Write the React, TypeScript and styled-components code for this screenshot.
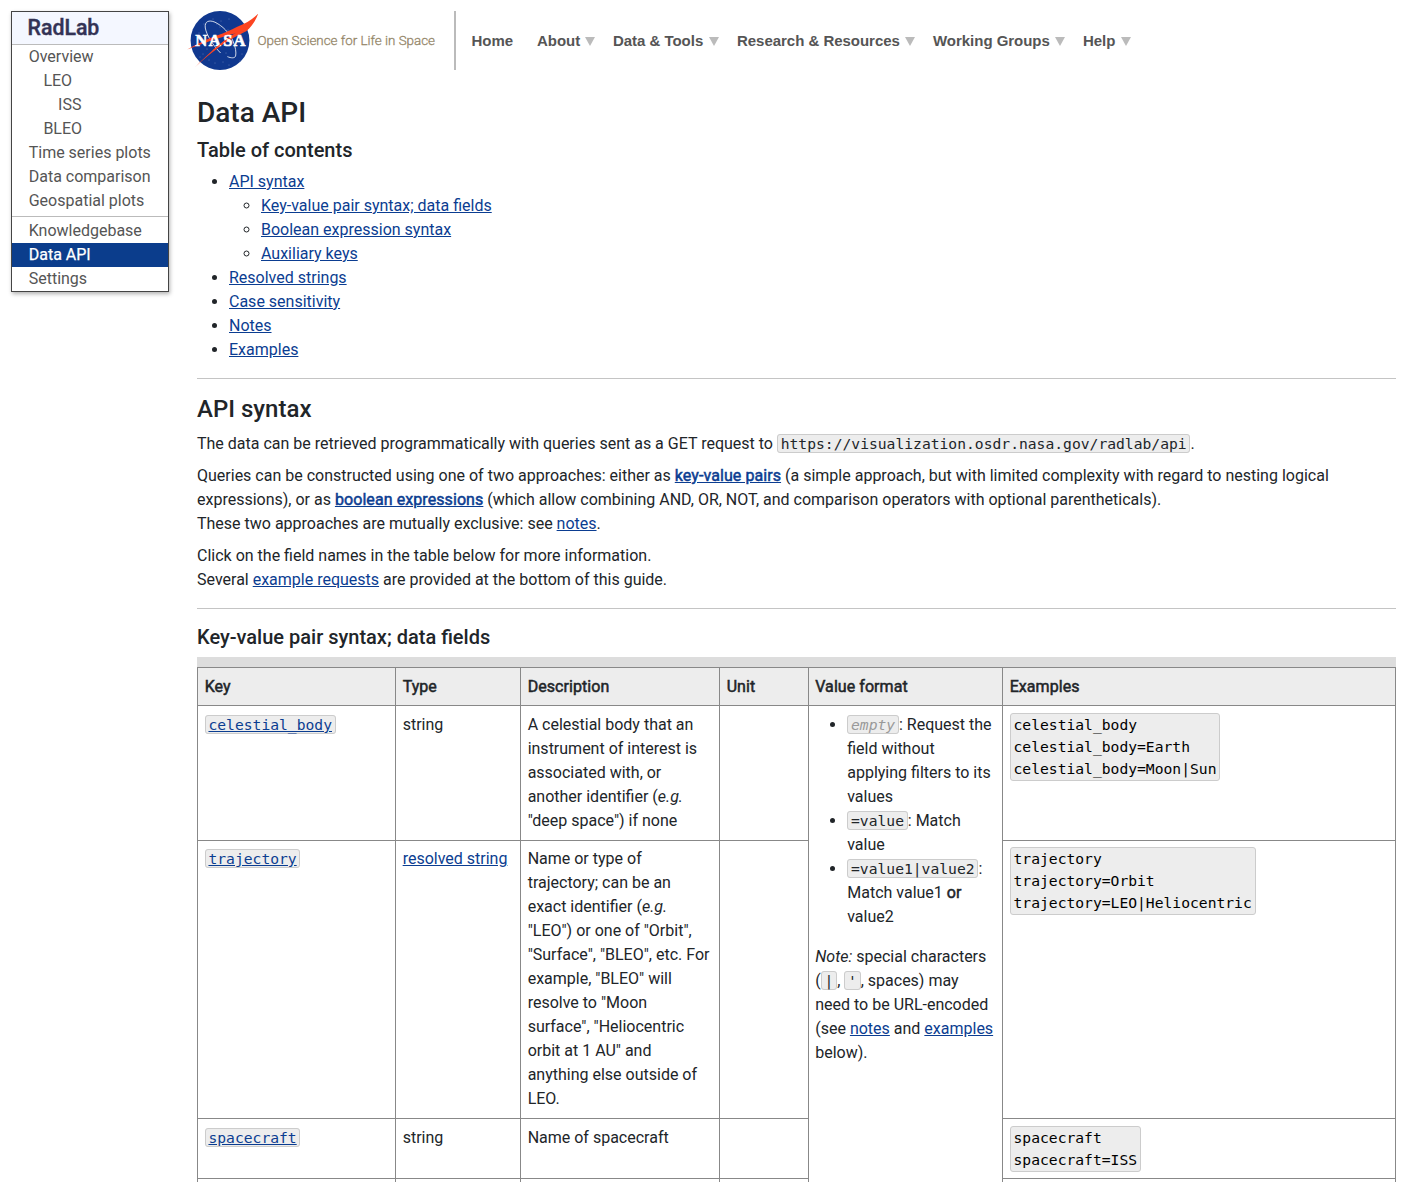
import React from "react";
import styled, { createGlobalStyle, css } from "styled-components";

const Global = createGlobalStyle`
  *, *::before, *::after { box-sizing: border-box; }
  html { overflow: hidden; }
  body {
    margin: 0;
    height: 1182px;
    overflow: hidden;
    background: #fff;
    color: #212529;
    font: 400 16px/24px Roboto, "Liberation Sans", sans-serif;
  }
`;

const Page = styled.div`
  display: flex;
  align-items: flex-start;
  gap: 28px;
  padding: 11px 11px 0;
  height: 1182px;
  overflow: hidden;
`;

const Sidebar = styled.nav`
  flex: 0 0 158px;
  border: 1px solid #444;
  background: #fff;
  box-shadow: 1px 2px 4px rgba(0, 0, 0, 0.3);
`;

const SidebarTitle = styled.div`
  height: 33px;
  padding-left: 15.5px;
  border-bottom: 1px solid #bbb;
  background: #f4f7ff;
  color: #335;
  font-size: 21.3px;
  font-weight: 500;
  line-height: 32px;
  -webkit-text-stroke: 0.4px #335;
`;

const SidebarGroup = styled.div`
  & + & {
    margin-top: 3px;
    padding-top: 2px;
    border-top: 1px solid #bbb;
  }
`;

const SidebarItem = styled.a<{ $level?: number; $active?: boolean }>`
  display: block;
  height: 24px;
  padding-left: ${(p) => 16.7 + (p.$level ?? 0) * 14.7}px;
  color: #555;
  ${(p) =>
    p.$active &&
    css`
      background: #0b3d8c;
      color: #fff;
      -webkit-text-stroke: 0.25px #fff;
    `}
`;

const Main = styled.main`
  flex: 1;
  min-width: 0;
`;

const Header = styled.header`
  display: flex;
  align-items: center;
  height: 59px;
  margin-left: -10px;
`;

const Logo = styled.svg`
  flex: 0 0 72px;
  width: 72px;
  height: 60px;
  overflow: visible;
`;

const Tagline = styled.span`
  flex: 0 0 197px;
  margin-left: -1.5px;
  padding-top: 0.5px;
  color: #95876a;
  font-size: 13.4px;
  font-weight: 300;
  line-height: 23px;
  white-space: nowrap;
  -webkit-text-stroke: 0.3px #95876a;
`;

const TopNav = styled.nav`
  display: flex;
  align-items: center;
  height: 59px;
  margin-left: -0.5px;
  padding-left: 15.5px;
  border-left: 2px solid #bbb;
  color: #555;
  font: 700 15px/24px "Liberation Sans", Arial, sans-serif;
  letter-spacing: -0.03px;
  white-space: nowrap;
`;

const NavItem = styled.a<{ $width: number }>`
  display: flex;
  align-items: center;
  gap: 5.3px;
  width: ${(p) => p.$width}px;
`;

const Caret = styled.i`
  margin-top: 1px;
  border: 5px solid transparent;
  border-top: 9px solid #bbb;
  border-bottom: 0;
`;

const H1 = styled.h1`
  margin: 26px 0 8px;
  font-size: 28px;
  font-weight: 500;
  line-height: 34px;
`;

const H2 = styled.h2`
  margin: 0 0 8px;
  font-size: 24px;
  font-weight: 500;
  line-height: 29px;
`;

const H3 = styled.h3`
  margin: 0 0 8px;
  font-size: 20px;
  font-weight: 500;
  line-height: 24px;
`;

const List = styled.ul`
  margin: 0;
  padding-left: 32px;
`;

const Rule = styled.hr`
  height: 1px;
  margin: 16px 0;
  border: 0;
  background: #c4c4c4;
`;

const P = styled.p`
  margin: 0 0 8px;
`;

const Link = styled.a<{ $strong?: boolean }>`
  color: #0b3d91;
  text-decoration: underline;
  ${(p) =>
    p.$strong &&
    css`
      letter-spacing: 0.08px;
      -webkit-text-stroke: 0.5px #0b3d91;
    `}
`;

const Strong = styled.span`
  -webkit-text-stroke: 0.5px currentColor;
`;

const Code = styled.code<{ $muted?: boolean }>`
  padding: 0 2.8px;
  border: 1px solid #ccc;
  border-radius: 3px;
  background: #ededed;
  font: 14.667px/17px "DejaVu Sans Mono", monospace;
  ${(p) =>
    p.$muted &&
    css`
      color: #999;
      font-style: italic;
    `}
`;

const Pre = styled.pre`
  width: fit-content;
  margin: 0;
  padding: 0 2.9px;
  border: 1px solid #ccc;
  border-radius: 3px;
  background: #ededed;
  color: #000;
  font: 14.667px/22px "DejaVu Sans Mono", monospace;
`;

const TableTop = styled.div`
  height: 9.7px;
  background: #ddd;
`;

const Table = styled.table`
  width: 1198.6px;
  table-layout: fixed;
  border-collapse: collapse;
`;

const Row = styled.tr<{ $height: number }>`
  height: ${(p) => p.$height}px;
`;

const Th = styled.th`
  padding: 7.3px 6.65px 6.1px;
  border: 1px solid #888;
  background: #ededed;
  font-weight: 400;
  letter-spacing: 0.06px;
  text-align: left;
  -webkit-text-stroke: 0.5px currentColor;
`;

const Td = styled.td`
  padding: 6.72px 6.65px 0;
  border: 1px solid #888;
  vertical-align: top;
`;

const FormatNote = styled.p`
  margin: 16px 0 0;
`;

const NasaLogo = () => (
  <Logo viewBox="187 11 72 60" aria-label="NASA">
    <circle cx="220" cy="40.5" r="29.4" fill="#10388f" />
    <g fill="#fff" opacity="0.6">
      {[
        [213, 19], [221, 21], [229, 19], [220, 27], [228, 30], [199, 33], [203, 54],
        [209, 60], [215, 63], [223, 62], [207, 49], [242, 54], [240, 61], [200, 57],
        [226, 53], [217, 24], [229, 65], [204, 24],
      ].map(([x, y]) => (
        <circle key={`${x}-${y}`} cx={x} cy={y} r="0.45" />
      ))}
    </g>
    <path
      d="M220.6 53C213 45.5 206.5 35 205.3 28C204.3 21.3 209 19.6 215 22.2C222.5 25.8 229.5 33 233 41C235.6 47 236.4 52.5 235.6 56C234.8 58.4 231 58.2 227.4 56.6"
      fill="none"
      stroke="#fff"
      strokeWidth="0.8"
    />
    <path
      d="M187.2 49.6C197 44 207 39 217 35.6C225 32.6 231 29.9 236.7 27C246 23.6 252.5 19.2 258.2 13.8C256 20.4 251.5 26.4 246.5 31C237 32.8 227 35.4 217 38.8C207 42 197 45.8 187.2 49.6Z"
      fill="#fc4421"
    />
    <path
      d="M195 67.2C201.5 60.4 211 51.3 219.5 44.4C225.5 39.5 232 34.6 238 31.4L246.5 31C238.5 34.8 229 40.2 220.6 46.1C212 52.3 202.5 60.4 195 67.2Z"
      fill="#fc4421"
    />
    <text
      y="45.8"
      fill="#fff"
      stroke="#fff"
      strokeWidth="0.6"
      fontFamily="'Liberation Serif', serif"
      fontWeight="700"
      fontSize="16.6"
    >
      <tspan x="195.2">N</tspan>
      <tspan x="208.8">A</tspan>
      <tspan x="223.2">S</tspan>
      <tspan x="233.4">A</tspan>
    </text>
    <path d="M212.5 50.3C217 46.3 221.5 42.6 226.2 39.4L227.8 39.8C222.6 43.2 217.6 47.2 213.4 51.2Z" fill="#fc4421" />
  </Logo>
);

const navItems: { label: string; width: number; menu?: boolean }[] = [
  { label: "Home", width: 65.5 },
  { label: "About", width: 76, menu: true },
  { label: "Data & Tools", width: 124, menu: true },
  { label: "Research & Resources", width: 196, menu: true },
  { label: "Working Groups", width: 150, menu: true },
  { label: "Help", width: 60, menu: true },
];

export default function App() {
  return (
    <>
      <Global />
      <Page>
        <Sidebar>
          <SidebarTitle>RadLab</SidebarTitle>
          <SidebarGroup>
            <SidebarItem>Overview</SidebarItem>
            <SidebarItem $level={1}>LEO</SidebarItem>
            <SidebarItem $level={2}>ISS</SidebarItem>
            <SidebarItem $level={1}>BLEO</SidebarItem>
            <SidebarItem>Time series plots</SidebarItem>
            <SidebarItem>Data comparison</SidebarItem>
            <SidebarItem>Geospatial plots</SidebarItem>
          </SidebarGroup>
          <SidebarGroup>
            <SidebarItem>Knowledgebase</SidebarItem>
            <SidebarItem $active>Data API</SidebarItem>
            <SidebarItem>Settings</SidebarItem>
          </SidebarGroup>
        </Sidebar>
        <Main>
          <Header>
            <NasaLogo />
            <Tagline>Open Science for Life in Space</Tagline>
            <TopNav>
              {navItems.map((item) => (
                <NavItem key={item.label} $width={item.width}>
                  {item.label}
                  {item.menu && <Caret />}
                </NavItem>
              ))}
            </TopNav>
          </Header>

          <H1>Data API</H1>
          <H3>Table of contents</H3>
          <List>
            <li>
              <Link>API syntax</Link>
              <List>
                <li><Link>Key-value pair syntax; data fields</Link></li>
                <li><Link>Boolean expression syntax</Link></li>
                <li><Link>Auxiliary keys</Link></li>
              </List>
            </li>
            <li><Link>Resolved strings</Link></li>
            <li><Link>Case sensitivity</Link></li>
            <li><Link>Notes</Link></li>
            <li><Link>Examples</Link></li>
          </List>
          <Rule />

          <H2>API syntax</H2>
          <P>
            The data can be retrieved programmatically with queries sent as a GET request to{" "}
            <Code>https://visualization.osdr.nasa.gov/radlab/api</Code>.
          </P>
          <P>
            Queries can be constructed using one of two approaches: either as{" "}
            <Link $strong>key-value pairs</Link> (a simple approach, but with limited complexity
            with regard to nesting logical expressions), or as{" "}
            <Link $strong>boolean expressions</Link> (which allow combining AND, OR, NOT, and
            comparison operators with optional parentheticals).
            <br />
            These two approaches are mutually exclusive: see <Link>notes</Link>.
          </P>
          <P>
            Click on the field names in the table below for more information.
            <br />
            Several <Link>example requests</Link> are provided at the bottom of this guide.
          </P>
          <Rule />

          <H3>Key-value pair syntax; data fields</H3>
          <TableTop />
          <Table>
            <colgroup>
              <col style={{ width: 198 }} />
              <col style={{ width: 125 }} />
              <col style={{ width: 199 }} />
              <col style={{ width: 88.6 }} />
              <col style={{ width: 194.4 }} />
              <col />
            </colgroup>
            <thead>
              <Row $height={38.44}>
                <Th>Key</Th>
                <Th>Type</Th>
                <Th>Description</Th>
                <Th>Unit</Th>
                <Th>Value format</Th>
                <Th>Examples</Th>
              </Row>
            </thead>
            <tbody>
              <Row $height={134.44}>
                <Td><Link><Code>celestial_body</Code></Link></Td>
                <Td>string</Td>
                <Td>
                  A celestial body that an instrument of interest is associated with, or another
                  identifier (<em>e.g.</em> "deep space") if none
                </Td>
                <Td />
                <Td rowSpan={4}>
                  <List>
                    <li><Code $muted>empty</Code>: Request the field without applying filters to its values</li>
                    <li><Code>=value</Code>: Match value</li>
                    <li><Code>=value1|value2</Code>: Match value1 <Strong>or</Strong> value2</li>
                  </List>
                  <FormatNote>
                    <em>Note:</em> special characters (<Code>|</Code>, <Code>'</Code>, spaces) may
                    need to be URL-encoded (see <Link>notes</Link> and <Link>examples</Link> below).
                  </FormatNote>
                </Td>
                <Td><Pre>{"celestial_body\ncelestial_body=Earth\ncelestial_body=Moon|Sun"}</Pre></Td>
              </Row>
              <Row $height={278.44}>
                <Td><Link><Code>trajectory</Code></Link></Td>
                <Td><Link>resolved string</Link></Td>
                <Td>
                  Name or type of trajectory; can be an exact identifier (<em>e.g.</em> "LEO") or
                  one of "Orbit", "Surface", "BLEO", etc. For example, "BLEO" will resolve to
                  "Moon surface", "Heliocentric orbit at 1 AU" and anything else outside of LEO.
                </Td>
                <Td />
                <Td><Pre>{"trajectory\ntrajectory=Orbit\ntrajectory=LEO|Heliocentric"}</Pre></Td>
              </Row>
              <Row $height={60.44}>
                <Td><Link><Code>spacecraft</Code></Link></Td>
                <Td>string</Td>
                <Td>Name of spacecraft</Td>
                <Td />
                <Td><Pre>{"spacecraft\nspacecraft=ISS"}</Pre></Td>
              </Row>
              <Row $height={60}>
                <Td />
                <Td />
                <Td />
                <Td />
                <Td />
              </Row>
            </tbody>
          </Table>
        </Main>
      </Page>
    </>
  );
}
